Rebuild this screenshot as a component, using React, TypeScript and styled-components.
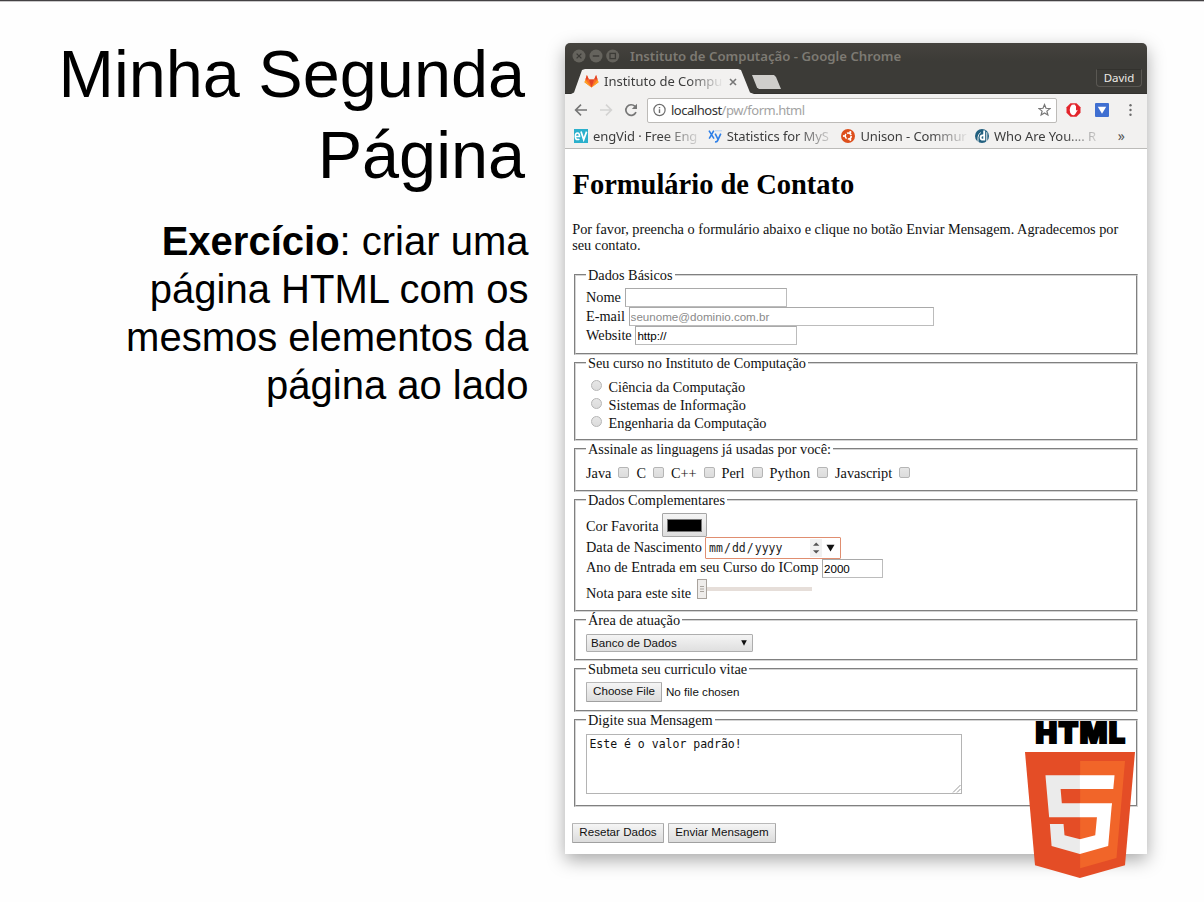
import React from 'react';
import styled, { createGlobalStyle } from 'styled-components';

const GlobalStyle = createGlobalStyle`
  *, *::before, *::after { box-sizing: border-box; }
  html, body { margin: 0; padding: 0; background: #fff; }
  body { width: 1204px; height: 902px; overflow: hidden; }
`;

const sans = '"Liberation Sans", Arial, sans-serif';
const serif = '"Liberation Serif", "Times New Roman", serif';
const mono = '"DejaVu Sans Mono", monospace';
const ui = '"Noto Sans", "Open Sans", sans-serif';

/* ---------- slide ---------- */

const Slide = styled.main`
  display: flex;
  align-items: flex-start;
  width: 1204px;
  height: 902px;
  background: #fefefe;
  border-top: 1px solid #434143;
  box-shadow: inset 0 1px 0 #c9c8c9;
`;

const Copy = styled.section`
  flex: none;
  width: 565px;
  padding: 33px 36.5px 0 0;
  font-family: ${sans};
  color: #000;
  text-align: right;
`;

const Title = styled.h1`
  margin: 0;
  padding-right: 3.5px;
  font-size: 66.6px;
  font-weight: 400;
  line-height: 80.6px;
  white-space: nowrap;
`;

const Exercise = styled.p`
  margin: 21.6px 0 0;
  font-size: 40px;
  line-height: 48.2px;
  white-space: nowrap;
`;

/* ---------- browser window ---------- */

const Browser = styled.section`
  position: relative;
  flex: none;
  display: flex;
  flex-direction: column;
  width: 582px;
  height: 811px;
  margin-top: 42px;
  background: #fff;
  border-radius: 5px 5px 0 0;
  box-shadow: 0 6px 18px rgba(0, 0, 0, 0.34);
`;

const Frame = styled.header`
  height: 51px;
  background: linear-gradient(#45433e, #3c3b37 18px);
  border-bottom: 1px solid #33322f;
  border-radius: 5px 5px 0 0;
`;

const TitleBar = styled.div`
  display: flex;
  align-items: center;
  height: 26px;
  padding-left: 7px;
`;

const Controls = styled.svg`
  flex: none;
  width: 48px;
  height: 14px;
  margin-right: 10px;
`;

const WindowTitle = styled.span`
  font: 600 13.2px/18px ${ui};
  color: #7d7a73;
  white-space: nowrap;
`;

const TabStrip = styled.div`
  display: flex;
  align-items: flex-start;
  height: 25px;
  padding-left: 6px;
`;

const Tab = styled.div`
  flex: none;
  display: flex;
  align-items: center;
  width: 183px;
  height: 25px;
  padding: 0 0 1px 13px;
  background: #f2f1f0;
  clip-path: polygon(0 100%, 3px 94%, 11px 4%, 14px 0, 167px 0, 170px 4%, 179px 94%, 183px 100%);
`;

const Fading = styled.span<{ $width: number; $fade: number; $size: number; $spacing: number }>`
  flex: none;
  width: ${(p) => p.$width}px;
  white-space: nowrap;
  font: 400 ${(p) => p.$size}px/20px ${ui};
  letter-spacing: ${(p) => p.$spacing}px;
  color: #3d3d3d;
  mask-image: linear-gradient(to right, #000 ${(p) => p.$fade}px, transparent);
`;

const TabIcon = styled.svg`
  flex: none;
  width: 15px;
  height: 14px;
  margin-right: 5px;
`;

const TabClose = styled.svg`
  flex: none;
  width: 8px;
  height: 8px;
  margin: 1px 0 0 5px;
`;

const NewTab = styled.div`
  width: 29px;
  height: 14px;
  margin: 6px 0 0 -2px;
  background: #cfcecb;
  clip-path: polygon(0 0, 22px 0, 24px 2px, 29px 100%, 7px 100%, 5px 90%);
`;

const Profile = styled.div`
  width: 46px;
  height: 18px;
  margin: 0 5px 0 auto;
  border: 1px solid #5a5853;
  border-top-color: #33322e;
  border-radius: 0 0 4px 4px;
  font: 400 11.5px/16px ${ui};
  color: #eceae6;
  text-align: center;
`;

const Toolbar = styled.div`
  display: flex;
  align-items: center;
  height: 31px;
  padding: 1px 0 0 9px;
  background: #f2f1f0;
`;

const ToolIcon = styled.svg<{ $w: number; $gap?: number }>`
  flex: none;
  width: ${(p) => p.$w}px;
  height: 16px;
  margin-right: ${(p) => p.$gap ?? 0}px;
`;

const Omnibox = styled.div`
  flex: none;
  display: flex;
  align-items: center;
  width: 410px;
  height: 25px;
  margin-right: 9px;
  padding: 0 5px;
  background: #fff;
  border: 1px solid #bdbbb8;
  border-radius: 2px;
`;

const Address = styled.span`
  flex: 1;
  font: 400 13px/20px ${ui};
  letter-spacing: -0.48px;
  color: #a3a3a3;
  white-space: nowrap;

  b { font-weight: 400; color: #333; }
`;

const Bookmarks = styled.nav`
  display: flex;
  align-items: center;
  height: 24px;
  padding: 0 0 1px 9px;
  background: #f2f1f0;
  border-bottom: 1px solid #bcbbb9;
`;

const Bookmark = styled.div`
  flex: none;
  display: flex;
  align-items: center;
  gap: 5px;
  width: 133.7px;
`;

const BookmarkIcon = styled.svg`
  flex: none;
  width: 14px;
  height: 14px;
`;

const More = styled.span`
  margin-left: 9px;
  font: 400 14px/18px ${ui};
  color: #555;
`;

/* ---------- form page ---------- */

const Page = styled.div`
  padding: 0 9px 0 7px;
  font: 400 14.3px/16px ${serif};
  color: #111;
`;

const Heading = styled.h1`
  margin: 0;
  padding: 20px 0 0 0.5px;
  font-size: 28.5px;
  line-height: 32px;
  color: #000;
`;

const Intro = styled.p`
  margin: 20px 0 14px;
  padding-left: 0.2px;
  white-space: nowrap;
`;

const Group = styled.fieldset<{ $height: number; $top?: number }>`
  min-width: 0;
  height: ${(p) => p.$height}px;
  margin: 0 0 0 1.5px;
  padding: ${(p) => p.$top ?? 5}px 0 0 10.5px;
  border: 2px groove #d4d4d4;
`;

const Legend = styled.legend`
  margin-left: 0;
  padding: 0 2px;
  height: 16px;
  line-height: 16px;
  white-space: nowrap;
`;

const Row = styled.div<{ $height: number; $align?: string }>`
  display: flex;
  align-items: ${(p) => p.$align ?? 'center'};
  height: ${(p) => p.$height}px;
  white-space: nowrap;
`;

const Label = styled.label<{ $shift?: number; $lift?: number }>`
  margin-right: 3.7px;
  padding-bottom: ${(p) => p.$lift ?? 0}px;
  padding-top: ${(p) => p.$shift ?? 0}px;
`;

const Field = styled.input<{ $width: number; $h?: number }>`
  width: ${(p) => p.$width}px;
  height: ${(p) => p.$h ?? 19}px;
  margin: 0;
  padding: 0 1px 1px;
  border: 1px solid #bcbcbc;
  border-top-color: #a9a9a9;
  border-left-color: #a9a9a9;
  border-radius: 0;
  outline: none;
  background: #fff;
  font: 400 11.6px/15px ${sans};
  color: #000;

  &::placeholder { color: #8a8a8a; opacity: 1; }
`;

const Mark = styled.input<{ $round?: boolean }>`
  appearance: none;
  flex: none;
  width: 11px;
  height: 11px;
  margin: ${(p) => (p.$round ? '0 7px 3px 4.5px' : '0 6.9px 2px 3.4px')};
  border: 1px solid #b5b5b5;
  border-radius: ${(p) => (p.$round ? '50%' : '2px')};
  background: linear-gradient(#e6e6e6, #dcdcdc);
`;

const Swatch = styled.button`
  width: 44.5px;
  height: 24px;
  padding: 4.5px 4px;
  border: 1px solid #a6a6a6;
  border-radius: 1px;
  background: linear-gradient(#f4f4f4, #dedede);

  &::before {
    content: '';
    display: block;
    height: 100%;
    background: #000;
    border: 1px solid #777;
  }
`;

const DateField = styled.div`
  display: flex;
  align-items: center;
  width: 136px;
  height: 22px;
  margin-left: -0.5px;
  padding-left: 3px;
  border: 1.5px solid #e08e70;
  border-radius: 1px;
  font: 400 11.5px/18px ${mono};
  color: #222;
`;

const DatePart = styled.span`
  margin-right: 1px;
`;

const DateArrows = styled.svg`
  width: 30px;
  height: 18px;
  margin-left: auto;
`;

const Slider = styled.div`
  display: flex;
  align-items: center;
  width: 115px;
  height: 20px;
  margin: 0 0 2px 1.8px;

  &::after {
    content: '';
    flex: 1;
    height: 4px;
    background: #e6ded9;
  }
`;

const Thumb = styled.svg`
  width: 10px;
  height: 20px;
`;

const Button = styled.button<{ $width: number }>`
  width: ${(p) => p.$width}px;
  height: 20px;
  margin: 0 4px 0 0;
  padding: 0 0 2px;
  border: 1px solid #b0b0b0;
  border-color: #b9b9b9 #a8a8a8 #a0a0a0 #b0b0b0;
  border-radius: 1px;
  background: linear-gradient(#f5f5f5, #dcdcdc);
  font: 400 11.6px/16px ${sans};
  color: #111;
  white-space: nowrap;
`;

const Select = styled.div`
  display: flex;
  align-items: center;
  justify-content: space-between;
  width: 167px;
  height: 18px;
  padding: 0 5px 0 4px;
  border: 1px solid #aeaeae;
  border-radius: 1px;
  background: linear-gradient(#f4f4f4, #dfdfdf);
  font: 400 11.6px/16px ${sans};
`;

const Caret = styled.svg`
  width: 6px;
  height: 6px;
`;

const FileName = styled.span`
  font: 400 11.6px/18px ${sans};
`;

const Message = styled.div`
  display: flex;
  align-items: flex-end;
  justify-content: space-between;
  width: 376px;
  height: 60px;
  padding: 1px 0 0 2.4px;
  border: 1px solid #b4b4b4;
  font: 400 11.5px/16px ${mono};

  span { align-self: flex-start; }
`;

const Grip = styled.svg`
  width: 9px;
  height: 9px;
`;

const Actions = styled.div`
  display: flex;
  margin-top: 16px;
`;

/* ---------- HTML5 badge ---------- */

const Badge = styled.div`
  position: absolute;
  left: 460px;
  top: 674px;
  width: 110px;
  display: flex;
  flex-direction: column;
  align-items: center;
`;

const BadgeText = styled.span`
  height: 35px;
  padding-left: 2px;
  font: 900 28.8px/31px Inter, ${sans};
  letter-spacing: 1.4px;
  color: #000;
  -webkit-text-stroke: 2px #000;
`;

const Shield = styled.svg`
  width: 110px;
  height: 126px;
`;

const courses = ['Ciência da Computação', 'Sistemas de Informação', 'Engenharia da Computação'];
const languages = ['Java', 'C', 'C++', 'Perl', 'Python', 'Javascript'];

const bookmarks = [
  {
    name: 'engVid · Free Eng',
    icon: (
      <BookmarkIcon viewBox="0 0 14 14">
        <rect width="14" height="14" fill="#2bb0cc" />
        <path d="M1.4 7.4H5.6C5.6 5 4.8 4 3.5 4S1.3 5.2 1.3 7.4 2.3 10.6 3.7 10.6q1 0 1.7-.5" fill="none" stroke="#fff" strokeWidth="1.5" />
        <path d="M7 2.6 9.7 10.6 12.6 2.6" fill="none" stroke="#fff" strokeWidth="1.7" />
      </BookmarkIcon>
    ),
  },
  {
    name: 'Statistics for MyS',
    icon: (
      <BookmarkIcon viewBox="0 0 14 14">
        <path d="M1 1.6 6 9.6M5.8 1.6 1.2 9.6" stroke="#2d7fe8" strokeWidth="1.6" />
        <path d="M7.2 4.6 9.8 10M12.8 4.6 9.6 11.6Q9 13.2 7 12.8" fill="none" stroke="#2d7fe8" strokeWidth="1.6" />
        <path d="M7 1.8H14" stroke="#b7d3f6" strokeWidth="1" />
      </BookmarkIcon>
    ),
  },
  {
    name: 'Unison - Commur',
    icon: (
      <BookmarkIcon viewBox="0 0 14 14">
        <circle cx="7" cy="7" r="7" fill="#dd4f1c" />
        <circle cx="7.2" cy="7" r="3" fill="none" stroke="#fff" strokeWidth="1.5" strokeDasharray="5 1.28" />
        <circle cx="2.9" cy="7" r="1.1" fill="#fff" />
        <circle cx="9.3" cy="3.2" r="1.1" fill="#fff" />
        <circle cx="9.3" cy="10.8" r="1.1" fill="#fff" />
      </BookmarkIcon>
    ),
  },
  {
    name: 'Who Are You.... R',
    icon: (
      <BookmarkIcon viewBox="0 0 14 14">
        <circle cx="7" cy="7" r="7" fill="#22607f" />
        <path d="M9.2 1.4V11.4M9.2 6.6Q5.6 5.8 5.6 8.6T9.2 10.4" fill="none" stroke="#fff" strokeWidth="1.9" />
        <path d="M3 14V8.5Q3 5 5.8 3.6M11.8 3.2V13" fill="none" stroke="#f2f1f0" strokeWidth="1" />
      </BookmarkIcon>
    ),
  },
];

export default function App() {
  return (
    <>
      <GlobalStyle />
      <Slide>
        <Copy>
          <Title>
            Minha Segunda
            <br />
            Página
          </Title>
          <Exercise>
            <b>Exercício</b>: criar uma
            <br />
            página HTML com os
            <br />
            mesmos elementos da
            <br />
            página ao lado
          </Exercise>
        </Copy>

        <Browser>
          <Frame>
            <TitleBar>
              <Controls viewBox="0 0 48 14">
                <g fill="#65635d">
                  <circle cx="7" cy="7" r="6.5" />
                  <circle cx="24" cy="7" r="6.5" />
                  <circle cx="40.7" cy="7" r="6.5" />
                </g>
                <g fill="none" stroke="#3c3b37" strokeWidth="1.3">
                  <path d="M4.6 4.6 9.4 9.4M9.4 4.6 4.6 9.4M20.8 7H27.2" />
                  <rect x="38" y="4.4" width="5.4" height="5.2" />
                </g>
              </Controls>
              <WindowTitle>Instituto de Computação - Google Chrome</WindowTitle>
            </TitleBar>
            <TabStrip>
              <Tab>
                <TabIcon viewBox="0 0 15 14">
                  <path d="M7.5 13.4.6 8.3 2.9 1 4.9 5.6H10.1L12.1 1 14.4 8.3Z" fill="#fc6d26" />
                  <path d="M7.5 13.4 4.9 5.6H10.1Z" fill="#e24329" />
                  <path d="M2.9 1 4.9 5.6H1.4ZM12.1 1 10.1 5.6H13.6Z" fill="#e24329" />
                  <path d="M1.4 5.8.4 8.3 7.5 13.4ZM13.6 5.8 14.6 8.3 7.5 13.4Z" fill="#fca326" />
                </TabIcon>
                <Fading $width={120} $fade={84} $size={13} $spacing={0}>Instituto de Compu</Fading>
                <TabClose viewBox="0 0 8 8">
                  <path d="M1 1 7 7M7 1 1 7" stroke="#777" strokeWidth="1.6" />
                </TabClose>
              </Tab>
              <NewTab />
              <Profile>David</Profile>
            </TabStrip>
          </Frame>

          <Toolbar>
            <ToolIcon $w={14} $gap={11} viewBox="0 0 14 16">
              <path d="M13 8H2M7 2.6 1.6 8 7 13.4" fill="none" stroke="#767676" strokeWidth="1.6" />
            </ToolIcon>
            <ToolIcon $w={14} $gap={11} viewBox="0 0 14 16">
              <path d="M1 8H12M7 2.6 12.4 8 7 13.4" fill="none" stroke="#d4d3d2" strokeWidth="1.6" />
            </ToolIcon>
            <ToolIcon $w={14} $gap={9} viewBox="0 0 14 16">
              <path d="M12 10.2A5.3 5.3 0 1 1 11 4.4" fill="none" stroke="#767676" strokeWidth="1.7" />
              <path d="M13 1.8V7H7.8Z" fill="#767676" />
            </ToolIcon>
            <Omnibox>
              <ToolIcon $w={13} $gap={5} viewBox="0 0 13 16">
                <circle cx="6.5" cy="8" r="5.6" fill="none" stroke="#6e6e6e" strokeWidth="1.2" />
                <path d="M6.5 7.2V11M6.5 4.9V6.2" stroke="#6e6e6e" strokeWidth="1.4" />
              </ToolIcon>
              <Address>
                <b>localhost</b>/pw/form.html
              </Address>
              <ToolIcon $w={13} viewBox="0 0 13 16">
                <path
                  d="M6.5 2.6 8 6.3 12 6.6 8.9 9.1 9.9 13 6.5 10.9 3.1 13 4.1 9.1 1 6.6 5 6.3Z"
                  fill="none"
                  stroke="#777"
                  strokeWidth="1.2"
                />
              </ToolIcon>
            </Omnibox>
            <ToolIcon $w={15} $gap={14} viewBox="0 0 15 16">
              <path d="M4.5 1.2H10.5L14.5 5.2V10.8L10.5 14.8H4.5L.5 10.8V5.2Z" fill="#e3242b" />
              <path d="M5.8 2.8Q3.7 5 3.7 8T5.7 12.8Q7.8 14 9.3 12L11.8 7.8 10 8.5V4.2L8.6 2.4Z" fill="#fff" />
            </ToolIcon>
            <ToolIcon $w={14} $gap={19} viewBox="0 0 14 16">
              <rect y="1" width="14" height="14" rx="1" fill="#3f6fd1" />
              <path d="M2.8 4.8H11.2L7 11.8Z" fill="#fff" />
            </ToolIcon>
            <ToolIcon $w={6} viewBox="0 0 6 16">
              <g fill="#6c6c6c">
                <circle cx="2.5" cy="3.2" r="1.2" />
                <circle cx="2.5" cy="8" r="1.2" />
                <circle cx="2.5" cy="12.8" r="1.2" />
              </g>
            </ToolIcon>
          </Toolbar>

          <Bookmarks>
            {bookmarks.map((b) => (
              <Bookmark key={b.name}>
                {b.icon}
                <Fading $width={110} $fade={70} $size={13} $spacing={-0.1}>{b.name}</Fading>
              </Bookmark>
            ))}
            <More>»</More>
          </Bookmarks>

          <Page>
            <Heading>Formulário de Contato</Heading>
            <Intro>
              Por favor, preencha o formulário abaixo e clique no botão Enviar Mensagem. Agradecemos por
              <br />
              seu contato.
            </Intro>

            <Group $height={88}>
              <Legend>Dados Básicos</Legend>
              <Row $height={19}>
                <Label $lift={2}>Nome</Label>
                <Field $width={162} />
              </Row>
              <Row $height={19}>
                <Label $lift={2}>E-mail</Label>
                <Field $width={305} placeholder="seunome@dominio.com.br" />
              </Row>
              <Row $height={19}>
                <Label $lift={2}>Website</Label>
                <Field $width={162} defaultValue="http://" />
              </Row>
            </Group>

            <Group $height={86} $top={7}>
              <Legend>Seu curso no Instituto de Computação</Legend>
              {courses.map((c) => (
                <Row key={c} $height={18}>
                  <Mark type="radio" name="curso" $round />
                  <span>{c}</span>
                </Row>
              ))}
            </Group>

            <Group $height={51} $top={7}>
              <Legend>Assinale as linguagens já usadas por você:</Legend>
              <Row $height={18}>
                {languages.map((l) => (
                  <React.Fragment key={l}>
                    <Label>{l}</Label>
                    <Mark type="checkbox" />
                  </React.Fragment>
                ))}
              </Row>
            </Group>

            <Group $height={120}>
              <Legend>Dados Complementares</Legend>
              <Row $height={24}>
                <Label $shift={2}>Cor Favorita</Label>
                <Swatch aria-label="Cor Favorita" />
              </Row>
              <Row $height={22}>
                <Label $lift={2}>Data de Nascimento</Label>
                <DateField>
                  <DatePart>mm</DatePart>
                  <DatePart>/</DatePart>
                  <DatePart>dd</DatePart>
                  <DatePart>/</DatePart>
                  <DatePart>yyyy</DatePart>
                  <DateArrows viewBox="0 0 30 18">
                    <rect width="12" height="18" fill="#f1f1f1" />
                    <path d="M3 6.8 6.2 3.4 9.4 6.8ZM3 11.2 6.2 14.6 9.4 11.2Z" fill="#555" />
                    <path d="M16.5 5.8H24.5L20.5 12.6Z" fill="#111" />
                  </DateArrows>
                </DateField>
              </Row>
              <Row $height={19}>
                <Label $lift={3}>Ano de Entrada em seu Curso do IComp</Label>
                <Field $width={61} defaultValue="2000" />
              </Row>
              <Row $height={24}>
                <Label $shift={6}>Nota para este site</Label>
                <Slider>
                  <Thumb viewBox="0 0 10 20">
                    <rect x=".5" y=".5" width="9" height="19" fill="#efedeb" stroke="#a9a39d" />
                    <path d="M3 7.5H7M3 10H7M3 12.5H7" stroke="#aaa59f" />
                  </Thumb>
                </Slider>
              </Row>
            </Group>

            <Group $height={49}>
              <Legend>Área de atuação</Legend>
              <Row $height={20}>
                <Select>
                  <span>Banco de Dados</span>
                  <Caret viewBox="0 0 6 6">
                    <path d="M.2.2H5.8L3 5.8Z" fill="#111" />
                  </Caret>
                </Select>
              </Row>
            </Group>

            <Group $height={51}>
              <Legend>Submeta seu curriculo vitae</Legend>
              <Row $height={20}>
                <Button $width={76}>Choose File</Button>
                <FileName>No file chosen</FileName>
              </Row>
            </Group>

            <Group $height={95} $top={6}>
              <Legend>Digite sua Mensagem</Legend>
              <Message>
                <span>Este é o valor padrão!</span>
                <Grip viewBox="0 0 9 9">
                  <path d="M1 8.5 8.5 1M5 8.5 8.5 5" stroke="#999" />
                </Grip>
              </Message>
            </Group>

            <Actions>
              <Button $width={92}>Resetar Dados</Button>
              <Button $width={108}>Enviar Mensagem</Button>
            </Actions>
          </Page>

          <Badge>
            <BadgeText>HTML</BadgeText>
            <Shield viewBox="30 0 451 512" preserveAspectRatio="none">
              <path d="M71 460 30 0H481L440 460 255 512Z" fill="#e44d26" />
              <path d="M256 472 405 431 440 37H256Z" fill="#f16529" />
              <path
                d="M256 208H181L176 150H256V94H114L115 109 129 265H256ZM256 355 192 338 188 293H132L139 382 255 414H256Z"
                fill="#ebebeb"
              />
              <path
                d="M255 208V265H325L318 338 255 355V414L371 382 372 372 385 223 387 208ZM255 94V150H392L393 138 396 109 397 94Z"
                fill="#fff"
              />
            </Shield>
          </Badge>
        </Browser>
      </Slide>
    </>
  );
}
